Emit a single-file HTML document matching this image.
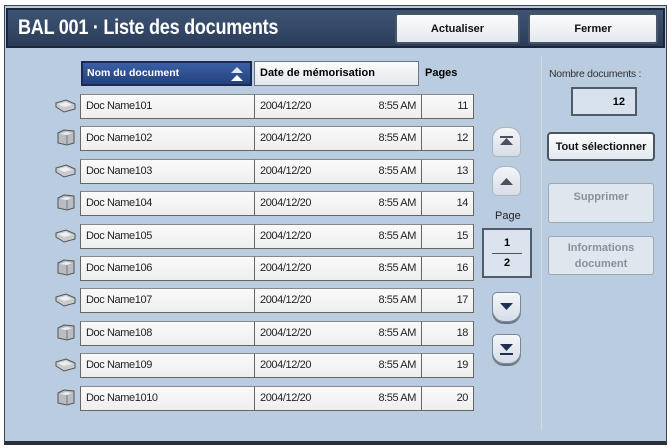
<!DOCTYPE html>
<html><head><meta charset="utf-8"><style>
*{box-sizing:border-box;margin:0;padding:0}
body{width:670px;height:448px;background:#fff;position:relative;overflow:hidden;font-family:"Liberation Sans",sans-serif}
.frame{position:absolute;left:4px;top:5px;width:663px;height:440px;background:#b9cce0;border:1px solid #3a4250;border-bottom:4px solid #2a3038}
.title{position:absolute;left:6px;top:8px;width:659px;height:40px;background:linear-gradient(#3e5474,#2a3c5a);border:2px solid #1c2638}
.title span{position:absolute;left:10px;top:6px;color:#fff;font-weight:bold;font-size:21px;letter-spacing:-0.3px;transform:scaleX(0.86);transform-origin:left center;white-space:nowrap}
.btn{position:absolute;background:linear-gradient(#fbfcfd,#e4e9ef);border:2px solid #4a5566;border-radius:3px;font-weight:bold;font-size:11px;color:#111;display:flex;align-items:center;justify-content:center;text-align:center}
.dis{border:1px solid #9aa8b8;color:#8a9099;background:#dfe6ee}
.abs{position:absolute}
.cell{position:absolute;height:25px;background:linear-gradient(#fafafa,#eeeeee);border:1px solid #666;border-top-color:#888;font-size:11px;color:#222;line-height:23px;padding:0 5px;letter-spacing:-0.4px}
.nav{position:absolute;left:492px;width:29px;height:30px;background:linear-gradient(#f4f6f8,#d6dde6);border:1px solid #7a8698;border-radius:5px 5px 12px 12px;box-shadow:0 2px 0 #6a7688}
.navu{border-radius:12px 12px 5px 5px;box-shadow:none;border-color:#a9b5c4}
</style></head><body>
<div class="frame"></div>
<div class="title"><span>BAL 001 · Liste des documents</span></div>
<div class="btn" style="left:395px;top:13px;width:125px;height:31px">Actualiser</div>
<div class="btn" style="left:528px;top:13px;width:130px;height:31px">Fermer</div>

<div class="abs" style="left:81px;top:61px;width:171px;height:25px;background:linear-gradient(#3b5fa4,#24417e);border:2px solid #1a2a50;color:#fff;font-weight:bold;font-size:10.5px;line-height:21px;padding-left:4px">Nom du document
<svg style="position:absolute;right:6px;top:3px" width="14" height="16"><polygon points="7,1 13,7 1,7" fill="#dfe6f0"/><polygon points="7,9 13,15 1,15" fill="#fff"/></svg></div>
<div class="abs" style="left:254px;top:61px;width:165px;height:25px;background:linear-gradient(#fafbfc,#e2e7ec);border:1px solid #6a7585;font-weight:bold;font-size:11px;line-height:23px;padding-left:5px">Date de mémorisation</div>
<div class="abs" style="left:425px;top:67px;font-weight:bold;font-size:11px">Pages</div>

<div id="rows"></div>

<svg class="abs" style="left:0;top:0" width="670" height="448" id="ic"></svg>

<div class="nav navu" style="top:127px"><svg width="27" height="28"><rect x="7" y="8" width="13" height="2" fill="#4a5262"/><polygon points="13.5,10 20,17 7,17" fill="#4a5262"/></svg></div>
<div class="nav navu" style="top:166px"><svg width="27" height="28"><polygon points="13.5,11 20,18 7,18" fill="#4a5262"/></svg></div>
<div class="abs" style="left:495px;top:210px;font-size:11px;color:#222">Page</div>
<div class="abs" style="left:482px;top:228px;width:50px;height:50px;background:#dbe4ee;border:2px solid #4f5a6a;font-weight:bold;font-size:11px;text-align:center">
<div style="margin-top:7px">1</div><div style="border-top:1px solid #555;margin:4px 8px 0;padding-top:3px">2</div></div>
<div class="nav" style="top:292px"><svg width="27" height="28"><polygon points="7,10 20,10 13.5,17" fill="#1f2f52"/></svg></div>
<div class="nav" style="top:334px"><svg width="27" height="28"><polygon points="7,9 20,9 13.5,16" fill="#1f2f52"/><rect x="7" y="18" width="13" height="2" fill="#1f2f52"/></svg></div>

<div class="abs" style="left:541px;top:56px;width:1px;height:374px;background:#9fb2c6;border-right:1px solid #d0dcea"></div>
<div class="abs" style="left:549px;top:68px;font-size:10.5px;color:#333;letter-spacing:-0.3px">Nombre documents :</div>
<div class="abs" style="left:571px;top:87px;width:66px;height:29px;background:#d8e2ec;border:2px solid #4f5a6a;font-weight:bold;font-size:11px;text-align:right;padding:7px 10px 0 0">12</div>
<div class="btn" style="left:547px;top:132px;width:108px;height:29px;border-radius:4px">Tout sélectionner</div>
<div class="btn dis" style="left:548px;top:183px;width:106px;height:40px;align-items:flex-start;padding-top:7px">Supprimer</div>
<div class="btn dis" style="left:548px;top:236px;width:106px;height:39px;line-height:16px">Informations<br>document</div>

<script>
var h='',s='';
for(var i=0;i<10;i++){var y=94+Math.round(i*32.4);
h+='<div class="cell" style="left:80px;top:'+y+'px;width:175px">Doc Name10'+(i+1)+'</div>';
h+='<div class="cell" style="left:254px;top:'+y+'px;width:168px">2004/12/20<span style="float:right">8:55 AM</span></div>';
h+='<div class="cell" style="left:421px;top:'+y+'px;width:53px;text-align:right">'+(11+i)+'</div>';
var cy=y+12;
if(i%2==0){s+='<path d="M56 '+(cy-3)+' L66 '+(cy-6)+' L75 '+(cy-2)+' L75 '+(cy+3)+' L64 '+(cy+6)+' L56 '+(cy+1)+' Z" fill="#c8ccd2" stroke="#555" stroke-width="1"/><path d="M58 '+(cy-2)+' L66 '+(cy-4)+' L72 '+(cy-1)+' L64 '+(cy+1)+' Z" fill="#eee"/>';}
else{s+='<path d="M58 '+(cy-5)+' L64 '+(cy-8)+' L74 '+(cy-7)+' L74 '+(cy+5)+' L67 '+(cy+7)+' L58 '+(cy+5)+' Z" fill="#b8bdc4" stroke="#555" stroke-width="1"/><path d="M60 '+(cy-4)+' L66 '+(cy-6)+' L72 '+(cy-5)+' L67 '+(cy-3)+' Z" fill="#eee"/><path d="M67 '+(cy-3)+' L67 '+(cy+7)+'" stroke="#777"/>';}
}
document.getElementById('rows').innerHTML=h;document.getElementById('ic').innerHTML=s;
</script>
</body></html>
